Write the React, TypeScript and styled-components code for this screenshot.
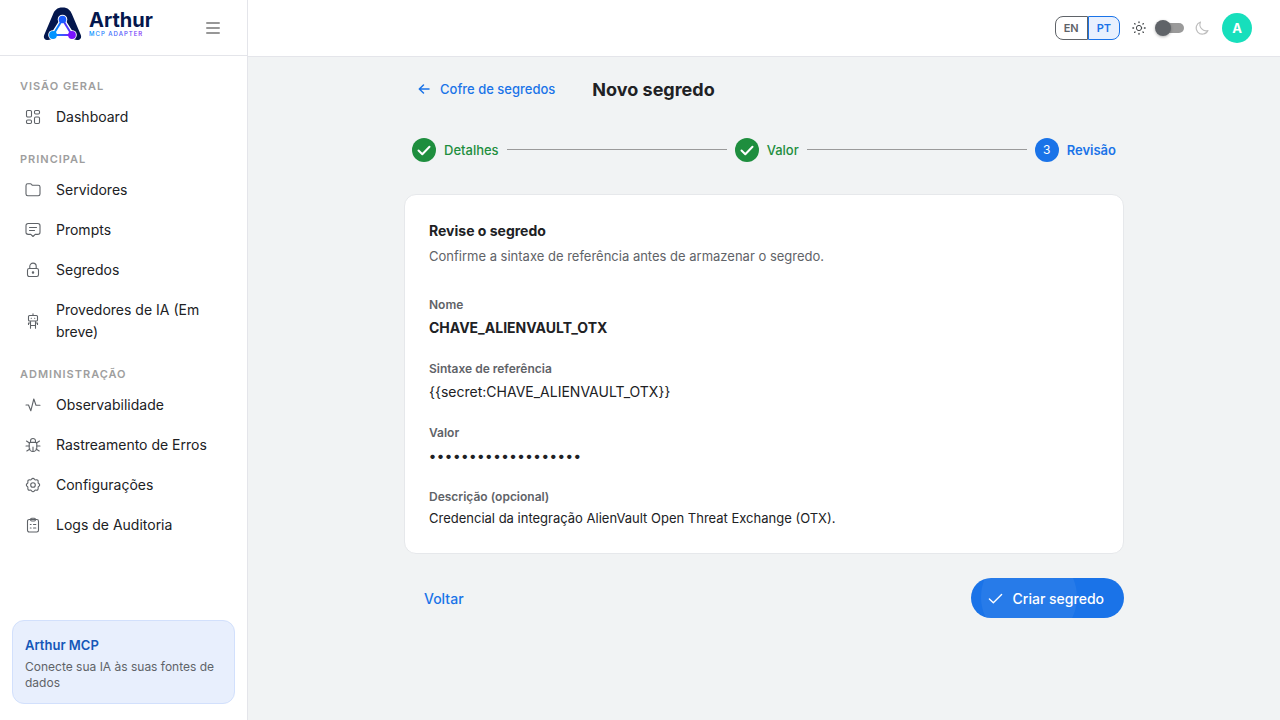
import React from "react";
import styled, { createGlobalStyle, css } from "styled-components";

const GlobalStyle = createGlobalStyle`
  *, *::before, *::after { box-sizing: border-box; }
  body {
    margin: 0;
    background: #f1f3f4;
    color: #202124;
    font-family: Inter, "Liberation Sans", sans-serif;
    font-size: 14px;
    line-height: 20px;
  }
  button, input { font-family: inherit; }
  h1, h2, p, ul, dl, dd, ol { margin: 0; padding: 0; }
  ul, ol { list-style: none; }
`;

const Shell = styled.div`
  display: flex;
  min-height: 100vh;
`;

const Sidebar = styled.aside`
  display: flex;
  flex-direction: column;
  flex: 0 0 248px;
  background: #fff;
  border-right: 1px solid #e4e5ea;
`;

const SidebarHeader = styled.div`
  display: flex;
  align-items: center;
  justify-content: space-between;
  height: 56px;
  padding: 0 24px 0 42px;
  border-bottom: 1px solid #e4e5ea;
`;

const LogoLink = styled.a`
  display: flex;
  padding-bottom: 8px;
`;

const IconButton = styled.button`
  display: flex;
  padding: 2px;
  border: 0;
  background: none;
  color: #757575;
  cursor: pointer;
`;

const Nav = styled.nav`
  display: flex;
  flex-direction: column;
  gap: 12px;
  flex: 1;
  padding: 20px 12px;
`;

const NavLabel = styled.h2`
  margin-bottom: 1px;
  padding: 0 8px;
  color: #9e9e9e;
  font-size: 11px;
  font-weight: 600;
  line-height: 20px;
  letter-spacing: 1px;
  text-transform: uppercase;
`;

const NavItem = styled.a`
  display: flex;
  align-items: center;
  gap: 15px;
  padding: 9px 16px 9px 13px;
  color: #202124;
  line-height: 22px;
  text-decoration: none;

  svg { flex: none; color: #5f6368; }
`;

const Promo = styled.section`
  margin: 0 12px 16px;
  padding: 16px 12px 12px;
  border: 1px solid #d2e0fc;
  border-radius: 12px;
  background: #e8effd;
`;

const PromoTitle = styled.h2`
  margin-bottom: 5px;
  color: #1557b8;
  font-size: 13px;
  font-weight: 600;
  line-height: 17px;
`;

const PromoText = styled.p`
  color: #5f6368;
  font-size: 12px;
  line-height: 16px;
`;

const Content = styled.div`
  display: flex;
  flex-direction: column;
  flex: 1;
  min-width: 0;
`;

const Topbar = styled.header`
  display: flex;
  align-items: center;
  justify-content: flex-end;
  height: 57px;
  padding: 0 28px;
  background: #fff;
  border-bottom: 1px solid #e4e5ea;
  color: #3c4043;
`;

const LanguageGroup = styled.div`
  display: flex;
  margin-right: 12px;
`;

const LanguageButton = styled.button<{ $active?: boolean }>`
  height: 24px;
  padding: 0 8px;
  border: 1px solid #5f6368;
  border-radius: 8px 0 0 8px;
  background: #fff;
  color: #5f6368;
  font-size: 11px;
  font-weight: 600;
  cursor: pointer;

  ${({ $active }) =>
    $active &&
    css`
      border-color: #1a73e8;
      border-radius: 0 8px 8px 0;
      background: #e8f0fe;
      color: #1a73e8;
    `}
`;

const ThemeSwitch = styled.input`
  display: flex;
  align-items: center;
  width: 29px;
  height: 16px;
  margin: 0 10px 0 9px;
  appearance: none;
  border-radius: 8px;
  cursor: pointer;

  &::before {
    content: "";
    width: 16px;
    height: 16px;
    border-radius: 50%;
    background: #5f6368;
    box-shadow: 0 1px 3px rgba(0, 0, 0, 0.3);
    z-index: 1;
  }

  &::after {
    content: "";
    width: 21px;
    height: 10px;
    margin-left: -8px;
    border-radius: 5px;
    background: #9a9a9a;
  }
`;

const MoonSlot = styled.span`
  display: flex;
  color: #bdbdbd;
`;

const Avatar = styled.button`
  width: 30px;
  height: 30px;
  margin-left: 12px;
  padding: 0;
  border: 0;
  border-radius: 50%;
  background: #17dfbc;
  color: #fff;
  font-size: 13px;
  font-weight: 700;
`;

const Main = styled.main`
  width: 100%;
  max-width: 768px;
  margin: 0 auto;
  padding: 15px 24px;
`;

const TitleRow = styled.div`
  display: flex;
  align-items: flex-start;
  gap: 37px;
  padding-left: 12px;
`;

const BackLink = styled.a`
  display: flex;
  align-items: center;
  gap: 8px;
  color: #1a73e8;
  font-size: 13px;
  font-weight: 500;
  line-height: 34px;
  text-decoration: none;
`;

const Title = styled.h1`
  font-size: 18px;
  font-weight: 700;
  line-height: 36px;
`;

const Stepper = styled.ol`
  display: flex;
  align-items: center;
  gap: 8px;
  margin: 30px 0 32px;
  padding: 0 8px;
`;

const Step = styled.li<{ $current?: boolean }>`
  display: flex;
  align-items: center;
  gap: 8px;
  color: ${({ $current }) => ($current ? "#1a73e8" : "#1e8e3e")};
  font-size: 13px;
  font-weight: ${({ $current }) => ($current ? 600 : 500)};
  line-height: 24px;
`;

const StepBadge = styled.span<{ $current?: boolean }>`
  display: flex;
  align-items: center;
  justify-content: center;
  width: 24px;
  height: 24px;
  border-radius: 50%;
  background: ${({ $current }) => ($current ? "#1a73e8" : "#1e8e3e")};
  color: #fff;
  font-size: 12px;
  font-weight: 400;
`;

const StepLine = styled.li`
  flex: 1;
  height: 2px;
  border-top: 1px solid #9a9a9a;
`;

const Card = styled.section`
  padding: 24px;
  border: 1px solid #e6e8eb;
  border-radius: 12px;
  background: #fff;
`;

const CardTitle = styled.h2`
  margin-bottom: 3px;
  font-size: 14px;
  font-weight: 700;
  line-height: 24px;
`;

const CardText = styled.p`
  color: #5f6368;
  font-size: 13px;
  line-height: 20px;
`;

const Fields = styled.dl`
  display: flex;
  flex-direction: column;
  gap: 18px;
  margin-top: 29px;
`;

const FieldName = styled.dt`
  color: #5f6368;
  font-size: 12px;
  font-weight: 600;
  line-height: 20px;
`;

const FieldValue = styled.dd<{ $strong?: boolean; $small?: boolean }>`
  font-size: ${({ $small }) => ($small ? 13 : 14)}px;
  font-weight: ${({ $strong }) => ($strong ? 700 : 400)};
  line-height: ${({ $small }) => ($small ? 22 : 26)}px;
`;

const MaskedValue = styled(FieldValue)`
  font-weight: 600;
  letter-spacing: 1px;
`;

const Actions = styled.div`
  display: flex;
  align-items: center;
  justify-content: space-between;
  margin-top: 24px;
`;

const TextButton = styled.button`
  height: 40px;
  padding: 0 20px;
  border: 0;
  background: none;
  color: #1a73e8;
  font-size: 14px;
  font-weight: 500;
  cursor: pointer;
`;

const PrimaryButton = styled.button`
  position: relative;
  display: flex;
  align-items: center;
  gap: 10px;
  height: 40px;
  padding: 0 20px 0 17px;
  overflow: hidden;
  border: 0;
  border-radius: 20px;
  background: #1a73e8;
  color: #fff;
  font-size: 14px;
  font-weight: 500;
  cursor: pointer;
`;

const Ripple = styled.span`
  position: absolute;
  top: -29px;
  left: 10px;
  width: 96px;
  height: 96px;
  border-radius: 50%;
  background: rgba(255, 255, 255, 0.06);
`;

const icons = {
  dashboard: (
    <>
      <rect x="1.5" y="1.5" width="5" height="6.5" rx="1.2" />
      <rect x="9.5" y="1.5" width="5" height="3.5" rx="1.2" />
      <rect x="1.5" y="11" width="5" height="3.5" rx="1.2" />
      <rect x="9.5" y="8" width="5" height="6.5" rx="1.2" />
    </>
  ),
  folder: <path d="M1 3.7C1 2.5 1.6 1.8 2.7 1.8h2.6c.6 0 1 .2 1.4.7l.6.8h6c1 0 1.7.7 1.7 1.7v7c0 1-.7 1.7-1.7 1.7H2.7c-1 0-1.7-.7-1.7-1.7z" />,
  prompt: (
    <>
      <path d="M3.2 1.5h9.6c1.2 0 2.2 1 2.2 2.2v6.5c0 1.2-1 2.2-2.2 2.2h-2.6L8 14.5l-2.2-2.1H3.2c-1.2 0-2.2-1-2.2-2.2V3.7c0-1.2 1-2.2 2.2-2.2z" />
      <path d="M4.5 5.5h7M4.5 8.5h5" />
    </>
  ),
  lock: (
    <>
      <rect x="2.5" y="6.5" width="11" height="8" rx="1.7" />
      <path d="M4.8 6.5V4.3a3.2 3.2 0 0 1 6.4 0v2.2" />
      <circle cx="8" cy="10.5" r=".7" fill="currentColor" />
    </>
  ),
  robot: (
    <>
      <rect x="3.5" y="2.5" width="9" height="5.5" rx="1" />
      <path d="M8 .8v1.7M6.2 5.2h.2M9.6 5.2h.2M5.5 8.5v4h5v-4M5.500 10H3.500v1.500M10.500 10h2v1.500M5.500 12.500v2.800M10.500 12.500v2.800" />
    </>
  ),
  activity: <path d="M1 8h2.5l2.300 5.800L8.800 2l2.200 6.200H15" />,
  bug: (
    <>
      <path d="M4.2 6.8c0-.8.6-1.4 1.4-1.4h4.800c.8 0 1.400.6 1.400 1.400v3.900a3.800 3.800 0 0 1-7.600 0z" />
      <path d="M5.500 5.300V4a2.500 2.500 0 0 1 5 0v1.300M8 10v4M1 9h3.200M11.800 9H15M1.500 4l3 2M14.500 4l-3 2M1.800 14l3.200-2M14.200 14L11 12" />
    </>
  ),
  gear: (
    <>
      <path d="M6.500 2.300c.8-1.300 2.200-1.300 3 0 .3.500.9.700 1.500.6 1.500-.4 2.500.6 2.100 2.100-.1.600.1 1.200.6 1.500 1.300.8 1.300 2.200 0 3-.5.3-.7.9-.6 1.500.4 1.500-.6 2.500-2.100 2.100-.6-.1-1.200.1-1.500.6-.8 1.300-2.200 1.300-3 0-.3-.5-.9-.7-1.500-.6-1.500.4-2.500-.6-2.100-2.100.1-.6-.1-1.200-.6-1.500-1.300-.8-1.300-2.200 0-3 .5-.3.7-.9.6-1.500-.4-1.500.6-2.500 2.100-2.100.6.1 1.200-.1 1.500-.6z" />
      <circle cx="8" cy="8" r="2.3" />
    </>
  ),
  clipboard: (
    <>
      <rect x="2.5" y="2.5" width="11" height="12.5" rx="1.7" />
      <path d="M5.500 2.500c0-.8.400-1.300 1.200-1.300h2.600c.8 0 1.200.5 1.200 1.300S10.100 4 9.300 4H6.700c-.8 0-1.200-.7-1.200-1.500zM5.300 7.500h.8M8.500 7.500h2.300M5.300 11h.8M8.500 11h2.300" />
    </>
  ),
  menu: <path d="M1.8 3h12.4M1.8 8h12.4M1.8 13h12.4" strokeWidth="1.5" />,
  back: <path d="M13 8H3.5M7.500 4L3.300 8l4.200 4" strokeWidth="1.5" />,
  check: <path d="M1.500 8.500l4.200 4 8.800-8.700" strokeWidth="1.5" />,
  checkBold: <path d="M2.500 8.500l3.800 3.800 7.200-7.600" strokeWidth="2" />,
  sun: (
    <>
      <circle cx="8" cy="8" r="3" />
      <path d="M8 1v.8M8 14.200v.8M1 8h.8M14.200 8h.8M3 3l.5.5M12.500 12.500l.5.5M3 13l.5-.5M12.500 3.500l.5-.5" strokeWidth="1.5" />
    </>
  ),
  moon: <path d="M6.500 2A6.200 6.200 0 1 0 14 10.500 6.200 6.200 0 0 1 6.500 2z" />,
};

type IconName = keyof typeof icons;

function Icon({ name, size = 16 }: { name: IconName; size?: number }) {
  return (
    <svg
      width={size}
      height={size}
      viewBox="0 0 16 16"
      fill="none"
      stroke="currentColor"
      strokeWidth="1.1"
      strokeLinecap="round"
      strokeLinejoin="round"
      aria-hidden="true"
    >
      {icons[name]}
    </svg>
  );
}

function Logo() {
  return (
    <svg width="114" height="36" viewBox="0 0 114 36" role="img" aria-label="Arthur MCP Adapter">
      <defs>
        <linearGradient id="tag" x1="0" x2="1">
          <stop offset="0" stopColor="#0096ff" />
          <stop offset="1" stopColor="#7a2cf5" />
        </linearGradient>
        <linearGradient id="left" gradientUnits="userSpaceOnUse" x1="20" y1="12" x2="11" y2="27">
          <stop offset="0" stopColor="#1a5cff" />
          <stop offset="1" stopColor="#0094ff" />
        </linearGradient>
        <linearGradient id="base" gradientUnits="userSpaceOnUse" x1="11" y1="0" x2="30" y2="0">
          <stop offset="0" stopColor="#0094ff" />
          <stop offset="1" stopColor="#7a14ff" />
        </linearGradient>
      </defs>
      <path
        d="M20.5 1.5C15 1.5 12.6 4.2 10.9 8.5L2.4 28.5C.9 32 2.7 34 6 34c1.8 0 3-.6 4-1.7h21c1 1.1 2.2 1.7 4 1.7 3.3 0 5.1-2 3.6-5.5L30.1 8.5C28.4 4.2 26 1.5 20.5 1.5z"
        fill="#04174d"
      />
      <path d="M20.5 14L11 29h19z" fill="#fff" stroke="#fff" strokeWidth="5" strokeLinejoin="round" />
      <path d="M10 31h21v4H10z" fill="#fff" />
      <circle cx="20.5" cy="13.5" r="4.8" fill="#fff" />
      <circle cx="11" cy="29" r="4.8" fill="#fff" />
      <circle cx="30" cy="29" r="4.8" fill="#fff" />
      <path d="M20.5 13.5L11 29" stroke="url(#left)" strokeWidth="2" />
      <path d="M20.5 13.5L30 29" stroke="#4b35ff" strokeWidth="2" />
      <path d="M11 28.900L30 29.100" stroke="url(#base)" strokeWidth="2" />
      <circle cx="20.5" cy="13.5" r="3.8" fill="#1a5cff" />
      <circle cx="11" cy="29" r="3.9" fill="#0094ff" />
      <circle cx="30" cy="29" r="3.9" fill="#7a14ff" />
      <text x="47" y="21" fontSize="20" fontWeight="700" fill="#04174d">
        Arthur
      </text>
      <text x="47" y="30" fontSize="6" fontWeight="500" letterSpacing="1" fill="url(#tag)">
        MCP ADAPTER
      </text>
    </svg>
  );
}

const sections: { label: string; items: { icon: IconName; text: string }[] }[] = [
  { label: "Visão geral", items: [{ icon: "dashboard", text: "Dashboard" }] },
  {
    label: "Principal",
    items: [
      { icon: "folder", text: "Servidores" },
      { icon: "prompt", text: "Prompts" },
      { icon: "lock", text: "Segredos" },
      { icon: "robot", text: "Provedores de IA (Em breve)" },
    ],
  },
  {
    label: "Administração",
    items: [
      { icon: "activity", text: "Observabilidade" },
      { icon: "bug", text: "Rastreamento de Erros" },
      { icon: "gear", text: "Configurações" },
      { icon: "clipboard", text: "Logs de Auditoria" },
    ],
  },
];

export default function App() {
  return (
    <>
      <GlobalStyle />
      <Shell>
        <Sidebar>
          <SidebarHeader>
            <LogoLink href="#">
              <Logo />
            </LogoLink>
            <IconButton type="button" aria-label="Menu">
              <Icon name="menu" />
            </IconButton>
          </SidebarHeader>
          <Nav>
            {sections.map((section) => (
              <div key={section.label}>
                <NavLabel>{section.label}</NavLabel>
                <ul>
                  {section.items.map((item) => (
                    <li key={item.text}>
                      <NavItem href="#">
                        <Icon name={item.icon} />
                        {item.text}
                      </NavItem>
                    </li>
                  ))}
                </ul>
              </div>
            ))}
          </Nav>
          <Promo>
            <PromoTitle>Arthur MCP</PromoTitle>
            <PromoText>Conecte sua IA às suas fontes de dados</PromoText>
          </Promo>
        </Sidebar>
        <Content>
          <Topbar>
            <LanguageGroup>
              <LanguageButton type="button">EN</LanguageButton>
              <LanguageButton type="button" $active>
                PT
              </LanguageButton>
            </LanguageGroup>
            <Icon name="sun" size={14} />
            <ThemeSwitch type="checkbox" role="switch" aria-label="Tema escuro" />
            <MoonSlot>
              <Icon name="moon" />
            </MoonSlot>
            <Avatar type="button">A</Avatar>
          </Topbar>
          <Main>
            <TitleRow>
              <BackLink href="#">
                <Icon name="back" />
                Cofre de segredos
              </BackLink>
              <Title>Novo segredo</Title>
            </TitleRow>
            <Stepper>
              <Step>
                <StepBadge>
                  <Icon name="checkBold" />
                </StepBadge>
                Detalhes
              </Step>
              <StepLine aria-hidden="true" />
              <Step>
                <StepBadge>
                  <Icon name="checkBold" />
                </StepBadge>
                Valor
              </Step>
              <StepLine aria-hidden="true" />
              <Step $current aria-current="step">
                <StepBadge $current>3</StepBadge>
                Revisão
              </Step>
            </Stepper>
            <Card>
              <CardTitle>Revise o segredo</CardTitle>
              <CardText>Confirme a sintaxe de referência antes de armazenar o segredo.</CardText>
              <Fields>
                <div>
                  <FieldName>Nome</FieldName>
                  <FieldValue $strong>CHAVE_ALIENVAULT_OTX</FieldValue>
                </div>
                <div>
                  <FieldName>Sintaxe de referência</FieldName>
                  <FieldValue>{"{{secret:CHAVE_ALIENVAULT_OTX}}"}</FieldValue>
                </div>
                <div>
                  <FieldName>Valor</FieldName>
                  <MaskedValue>{"•".repeat(19)}</MaskedValue>
                </div>
                <div>
                  <FieldName>Descrição (opcional)</FieldName>
                  <FieldValue $small>Credencial da integração AlienVault Open Threat Exchange (OTX).</FieldValue>
                </div>
              </Fields>
            </Card>
            <Actions>
              <TextButton type="button">Voltar</TextButton>
              <PrimaryButton type="button">
                <Ripple aria-hidden="true" />
                <Icon name="check" size={15} />
                Criar segredo
              </PrimaryButton>
            </Actions>
          </Main>
        </Content>
      </Shell>
    </>
  );
}
